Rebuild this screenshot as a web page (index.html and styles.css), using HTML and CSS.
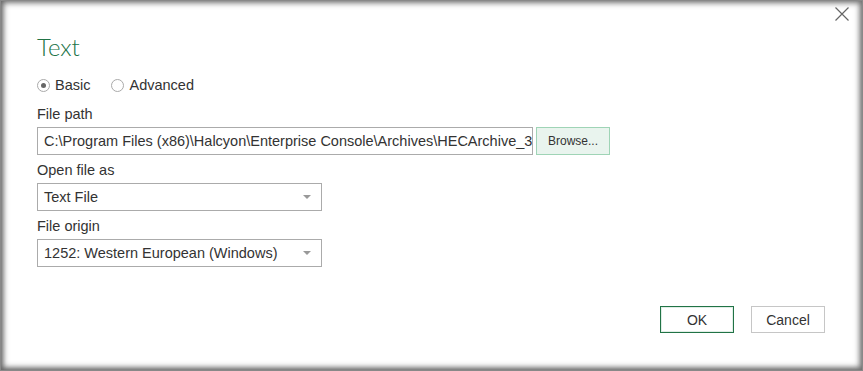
FILE: index.html
```html
<!DOCTYPE html>
<html lang="en">
<head>
    <meta charset="UTF-8">
    <title>Text</title>
    <link rel="stylesheet" href="styles.css">
</head>
<body>
    <div class="dialog">
        <button class="close-btn" title="Close">
            <svg width="14" height="14" viewBox="0 0 14 14"><path d="M0.5 0.5 L13.5 13.5 M13.5 0.5 L0.5 13.5" stroke="#666" stroke-width="1.2" fill="none"/></svg>
        </button>

        <h1>Text</h1>

        <div class="mode">
            <label class="radio"><span class="dot checked"></span>Basic</label>
            <label class="radio"><span class="dot"></span>Advanced</label>
        </div>

        <div class="field first">
            <div class="label">File path</div>
            <div class="path-row">
                <div class="input">C:\Program Files (x86)\Halcyon\Enterprise Console\Archives\HECArchive_31</div>
                <button class="browse">Browse...</button>
            </div>
        </div>

        <div class="field">
            <div class="label">Open file as</div>
            <div class="select">Text File<span class="caret"></span></div>
        </div>

        <div class="field">
            <div class="label">File origin</div>
            <div class="select">1252: Western European (Windows)<span class="caret"></span></div>
        </div>

        <div class="footer">
            <button class="btn ok">OK</button>
            <button class="btn">Cancel</button>
        </div>
    </div>
</body>
</html>
```

FILE: styles.css
```css
body {
    margin: 0;
    font-family: 'Liberation Sans', Arial, sans-serif;
    font-size: 14.5px;
    color: #333;
    background: #fff;
}

.dialog {
    position: relative;
    width: 863px;
    height: 371px;
    box-sizing: border-box;
    padding: 31px 0 0 37px;
    background: #fff;
    box-shadow: inset 0 0 0 1px #888, inset 4px 0 6px -1px #666, inset -4px 0 6px -1px #777, inset 0 -4px 6px -1px #666, inset 0 4px 6px -1px #999;
}

.close-btn {
    position: absolute;
    top: 7px;
    right: 14px;
    padding: 0;
    border: none;
    background: none;
    line-height: 0;
    cursor: pointer;
}

h1 {
    margin: 0;
    font-family: Lato, 'Liberation Sans', sans-serif;
    font-weight: 300;
    font-size: 24px;
    line-height: 32px;
    color: #217346;
}

.mode {
    display: flex;
    gap: 21px;
    margin-top: 12px;
}

.radio {
    display: flex;
    align-items: center;
    gap: 5px;
    height: 20px;
}

.dot {
    width: 11px;
    height: 11px;
    border: 1px solid #aaa;
    border-radius: 50%;
    position: relative;
}

.dot.checked::after {
    content: "";
    position: absolute;
    left: 3px;
    top: 3px;
    width: 5px;
    height: 5px;
    border-radius: 50%;
    background: #666;
}

.field {
    margin-top: 6px;
}

.field.first {
    margin-top: 10px;
}

.label {
    line-height: 18px;
    margin-bottom: 4px;
}

.path-row {
    display: flex;
    gap: 3px;
}

.input, .select {
    box-sizing: border-box;
    height: 28px;
    line-height: 26px;
    padding: 0 6px;
    border: 1px solid #ababab;
    white-space: nowrap;
    overflow: hidden;
}

.input {
    width: 496px;
}

.select {
    width: 285px;
    display: flex;
    justify-content: space-between;
    align-items: center;
    padding-right: 10px;
}

.caret {
    width: 0;
    height: 0;
    border-left: 4px solid transparent;
    border-right: 4px solid transparent;
    border-top: 4px solid #999;
}

.browse {
    width: 74px;
    height: 28px;
    font-family: inherit;
    font-size: 12px;
    color: #333;
    background: #e9f4ee;
    border: 1px solid #9fd4b6;
    padding: 0;
}

.footer {
    display: flex;
    justify-content: flex-end;
    gap: 17px;
    margin-top: 39px;
    padding-right: 38px;
}

.btn {
    width: 74px;
    height: 27px;
    font-family: inherit;
    font-size: 14px;
    color: #333;
    background: #fff;
    border: 1px solid #c6c6c6;
    padding: 0;
}

.btn.ok {
    border: 1px solid #217346;
    box-shadow: inset 0 0 0 1px #e0eee6;
}
```
